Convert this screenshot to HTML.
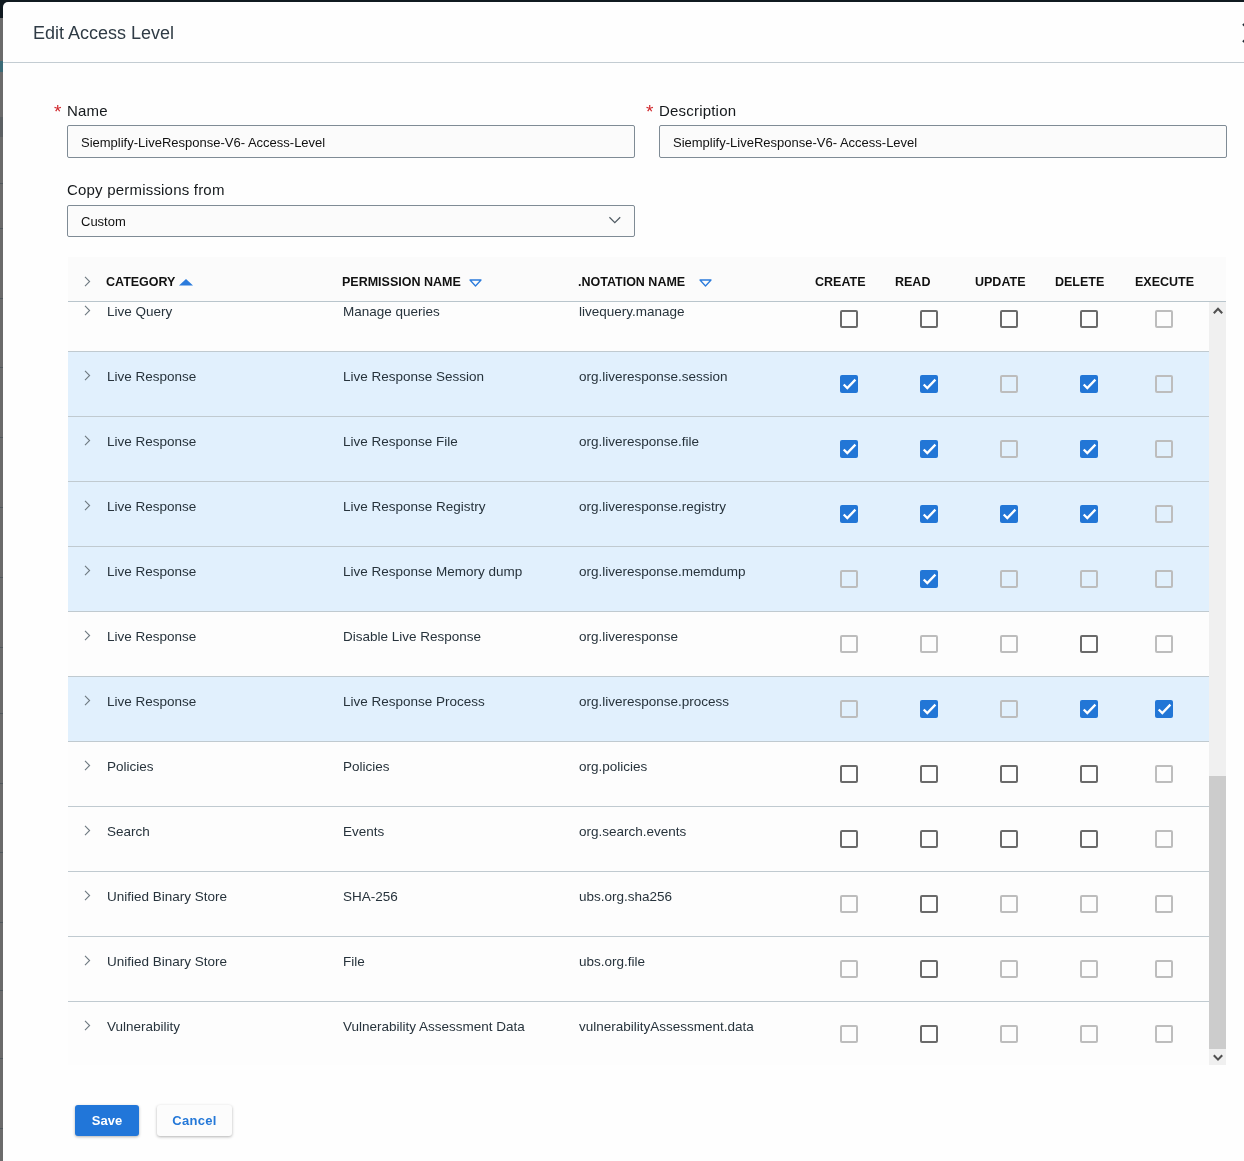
<!DOCTYPE html>
<html><head><meta charset="utf-8"><style>
*{box-sizing:border-box;margin:0;padding:0}
html,body{width:1244px;height:1161px;overflow:hidden}
body{background:#6b6b6b;font-family:"Liberation Sans",sans-serif;position:relative;-webkit-font-smoothing:antialiased}
.modal{will-change:transform}
.topbar{position:absolute;left:0;top:0;width:1244px;height:18px;background:#101a20}
.modal{position:absolute;left:3px;top:2px;width:1260px;height:1200px;background:#fefefe;border-radius:5px 0 0 0;overflow:hidden}
.abs{position:absolute}
.title{left:30px;top:21px;font-size:18px;color:#2f3b45;white-space:nowrap}
.hline{left:0;top:60px;width:1260px;height:1px;background:#c3ccd2}
.lbl{font-size:15px;letter-spacing:0.2px;color:#15191c;white-space:nowrap}
.star{color:#d0262b;font-size:19px;line-height:19px}
.inp{border:1px solid #7f8b95;border-radius:2px;background:#fbfbfb;height:33px}
.inp span{position:absolute;left:13px;top:9px;font-size:13px;letter-spacing:0px;color:#111;white-space:nowrap}
.thead{left:65px;top:255px;width:1158px;height:45px;background:#fbfbfb;border-bottom:1px solid #b9c5cc}
.th{font-size:12.5px;font-weight:bold;color:#111;white-space:nowrap;top:18px}
.body{left:65px;top:300px;width:1141px;height:763px;overflow:hidden;background:#fdfdfd}
.row{position:absolute;left:0;width:1141px;height:65px;border-bottom:1px solid #c0cad0}
.row.sel{background:#e1f0fd}
.cell{position:absolute;top:17px;font-size:13.5px;color:#27333c;white-space:nowrap}
.cb{position:absolute;width:18px;height:18px;border-radius:2px}
.cb.u{border:2px solid #6a6a6a}
.cb.d{border:2px solid #bdbdbd}
.cb.c{background:#2276d6}
.sb{left:1206px;top:300px;width:17px;height:763px;background:#f0f0f0}
.thumb{left:1206px;top:774px;width:17px;height:273px;background:#cccccc}
.btn{height:31px;border-radius:3px;font-size:13px;font-weight:bold;text-align:center;line-height:31px}
</style></head><body>
<div class="topbar"></div><div style="position:absolute;left:0;top:183px;width:3px;height:1px;background:#50585c"></div><div style="position:absolute;left:0;top:228px;width:3px;height:1px;background:#50585c"></div><div style="position:absolute;left:0;top:298px;width:3px;height:1px;background:#50585c"></div><div style="position:absolute;left:0;top:367px;width:3px;height:1px;background:#50585c"></div><div style="position:absolute;left:0;top:437px;width:3px;height:1px;background:#50585c"></div><div style="position:absolute;left:0;top:507px;width:3px;height:1px;background:#50585c"></div><div style="position:absolute;left:0;top:577px;width:3px;height:1px;background:#50585c"></div><div style="position:absolute;left:0;top:647px;width:3px;height:1px;background:#50585c"></div><div style="position:absolute;left:0;top:713px;width:3px;height:1px;background:#50585c"></div><div style="position:absolute;left:0;top:783px;width:3px;height:1px;background:#50585c"></div><div style="position:absolute;left:0;top:852px;width:3px;height:1px;background:#50585c"></div><div style="position:absolute;left:0;top:922px;width:3px;height:1px;background:#50585c"></div><div style="position:absolute;left:0;top:990px;width:3px;height:1px;background:#50585c"></div><div style="position:absolute;left:0;top:1058px;width:3px;height:1px;background:#50585c"></div><div style="position:absolute;left:0;top:1128px;width:3px;height:1px;background:#50585c"></div><div style="position:absolute;left:0;top:61px;width:3px;height:11px;background:#3a6a76"></div><div style="position:absolute;left:0;top:117px;width:3px;height:20px;background:#5c6063"></div>
<div class="modal">

<div class="abs title">Edit Access Level</div>
<div class="abs hline"></div>
<div class="abs star" style="left:51px;top:100px">*</div>
<div class="abs lbl" style="left:64px;top:100px">Name</div>
<div class="abs inp" style="left:64px;top:123px;width:568px"><span>Siemplify-LiveResponse-V6- Access-Level</span></div>
<div class="abs star" style="left:643px;top:100px">*</div>
<div class="abs lbl" style="left:656px;top:100px">Description</div>
<div class="abs inp" style="left:656px;top:123px;width:568px"><span>Siemplify-LiveResponse-V6- Access-Level</span></div>
<div class="abs lbl" style="left:64px;top:179px">Copy permissions from</div>
<div class="abs inp" style="left:64px;top:203px;width:568px;height:32px"><span style="top:8px">Custom</span><svg class="abs" style="left:541px;top:10px" width="12" height="8" viewBox="0 0 12 8"><path d="M0.4 1.3 L5.8 6.7 L11.2 1.3" fill="none" stroke="#505b63" stroke-width="1.25"/></svg></div>
<div class="abs thead">
<svg class="abs" style="left:16px;top:19px" width="7" height="11" viewBox="0 0 7 11"><path d="M1 0.8 L5.6 5.5 L1 10.2" fill="none" stroke="#6f7a82" stroke-width="1.1"/></svg>
<div class="abs th" style="left:38px">CATEGORY</div>
<svg class="abs" style="left:111px;top:21px" width="14" height="8" viewBox="0 0 14 8"><path d="M0 7.6 L7 0.9 L14 7.6 Z" fill="#2b7bdc"/></svg>
<div class="abs th" style="left:274px">PERMISSION NAME</div>
<svg class="abs" style="left:401px;top:22px" width="13" height="8" viewBox="0 0 13 8"><path d="M1 1 L12 1 L6.5 7 Z" fill="none" stroke="#2b7bdc" stroke-width="1.3" stroke-linejoin="round"/></svg>
<div class="abs th" style="left:510px">.NOTATION NAME</div>
<svg class="abs" style="left:631px;top:22px" width="13" height="8" viewBox="0 0 13 8"><path d="M1 1 L12 1 L6.5 7 Z" fill="none" stroke="#2b7bdc" stroke-width="1.3" stroke-linejoin="round"/></svg>
<div class="abs th" style="left:747px">CREATE</div>
<div class="abs th" style="left:827px">READ</div>
<div class="abs th" style="left:907px">UPDATE</div>
<div class="abs th" style="left:987px">DELETE</div>
<div class="abs th" style="left:1067px">EXECUTE</div>
</div>
<div class="abs body">
<div class="row" style="top:-15px">
<svg class="abs" style="left:16px;top:18px" width="7" height="11" viewBox="0 0 7 11"><path d="M1 0.8 L5.6 5.5 L1 10.2" fill="none" stroke="#6f7a82" stroke-width="1.1"/></svg>
<div class="cell" style="left:39px">Live Query</div>
<div class="cell" style="left:275px">Manage queries</div>
<div class="cell" style="left:511px">livequery.manage</div>
<div class="cb u" style="left:772px;top:23px"></div>
<div class="cb u" style="left:852px;top:23px"></div>
<div class="cb u" style="left:932px;top:23px"></div>
<div class="cb u" style="left:1012px;top:23px"></div>
<div class="cb d" style="left:1087px;top:23px"></div>
</div>
<div class="row sel" style="top:50px">
<svg class="abs" style="left:16px;top:18px" width="7" height="11" viewBox="0 0 7 11"><path d="M1 0.8 L5.6 5.5 L1 10.2" fill="none" stroke="#6f7a82" stroke-width="1.1"/></svg>
<div class="cell" style="left:39px">Live Response</div>
<div class="cell" style="left:275px">Live Response Session</div>
<div class="cell" style="left:511px">org.liveresponse.session</div>
<div class="cb c" style="left:772px;top:23px"><svg width="18" height="18" viewBox="0 0 18 18" style="position:absolute;left:0;top:0"><path d="M3.7 9.5 L7.3 13 L15.4 4.6" fill="none" stroke="#fff" stroke-width="2.3"/></svg></div>
<div class="cb c" style="left:852px;top:23px"><svg width="18" height="18" viewBox="0 0 18 18" style="position:absolute;left:0;top:0"><path d="M3.7 9.5 L7.3 13 L15.4 4.6" fill="none" stroke="#fff" stroke-width="2.3"/></svg></div>
<div class="cb d" style="left:932px;top:23px"></div>
<div class="cb c" style="left:1012px;top:23px"><svg width="18" height="18" viewBox="0 0 18 18" style="position:absolute;left:0;top:0"><path d="M3.7 9.5 L7.3 13 L15.4 4.6" fill="none" stroke="#fff" stroke-width="2.3"/></svg></div>
<div class="cb d" style="left:1087px;top:23px"></div>
</div>
<div class="row sel" style="top:115px">
<svg class="abs" style="left:16px;top:18px" width="7" height="11" viewBox="0 0 7 11"><path d="M1 0.8 L5.6 5.5 L1 10.2" fill="none" stroke="#6f7a82" stroke-width="1.1"/></svg>
<div class="cell" style="left:39px">Live Response</div>
<div class="cell" style="left:275px">Live Response File</div>
<div class="cell" style="left:511px">org.liveresponse.file</div>
<div class="cb c" style="left:772px;top:23px"><svg width="18" height="18" viewBox="0 0 18 18" style="position:absolute;left:0;top:0"><path d="M3.7 9.5 L7.3 13 L15.4 4.6" fill="none" stroke="#fff" stroke-width="2.3"/></svg></div>
<div class="cb c" style="left:852px;top:23px"><svg width="18" height="18" viewBox="0 0 18 18" style="position:absolute;left:0;top:0"><path d="M3.7 9.5 L7.3 13 L15.4 4.6" fill="none" stroke="#fff" stroke-width="2.3"/></svg></div>
<div class="cb d" style="left:932px;top:23px"></div>
<div class="cb c" style="left:1012px;top:23px"><svg width="18" height="18" viewBox="0 0 18 18" style="position:absolute;left:0;top:0"><path d="M3.7 9.5 L7.3 13 L15.4 4.6" fill="none" stroke="#fff" stroke-width="2.3"/></svg></div>
<div class="cb d" style="left:1087px;top:23px"></div>
</div>
<div class="row sel" style="top:180px">
<svg class="abs" style="left:16px;top:18px" width="7" height="11" viewBox="0 0 7 11"><path d="M1 0.8 L5.6 5.5 L1 10.2" fill="none" stroke="#6f7a82" stroke-width="1.1"/></svg>
<div class="cell" style="left:39px">Live Response</div>
<div class="cell" style="left:275px">Live Response Registry</div>
<div class="cell" style="left:511px">org.liveresponse.registry</div>
<div class="cb c" style="left:772px;top:23px"><svg width="18" height="18" viewBox="0 0 18 18" style="position:absolute;left:0;top:0"><path d="M3.7 9.5 L7.3 13 L15.4 4.6" fill="none" stroke="#fff" stroke-width="2.3"/></svg></div>
<div class="cb c" style="left:852px;top:23px"><svg width="18" height="18" viewBox="0 0 18 18" style="position:absolute;left:0;top:0"><path d="M3.7 9.5 L7.3 13 L15.4 4.6" fill="none" stroke="#fff" stroke-width="2.3"/></svg></div>
<div class="cb c" style="left:932px;top:23px"><svg width="18" height="18" viewBox="0 0 18 18" style="position:absolute;left:0;top:0"><path d="M3.7 9.5 L7.3 13 L15.4 4.6" fill="none" stroke="#fff" stroke-width="2.3"/></svg></div>
<div class="cb c" style="left:1012px;top:23px"><svg width="18" height="18" viewBox="0 0 18 18" style="position:absolute;left:0;top:0"><path d="M3.7 9.5 L7.3 13 L15.4 4.6" fill="none" stroke="#fff" stroke-width="2.3"/></svg></div>
<div class="cb d" style="left:1087px;top:23px"></div>
</div>
<div class="row sel" style="top:245px">
<svg class="abs" style="left:16px;top:18px" width="7" height="11" viewBox="0 0 7 11"><path d="M1 0.8 L5.6 5.5 L1 10.2" fill="none" stroke="#6f7a82" stroke-width="1.1"/></svg>
<div class="cell" style="left:39px">Live Response</div>
<div class="cell" style="left:275px">Live Response Memory dump</div>
<div class="cell" style="left:511px">org.liveresponse.memdump</div>
<div class="cb d" style="left:772px;top:23px"></div>
<div class="cb c" style="left:852px;top:23px"><svg width="18" height="18" viewBox="0 0 18 18" style="position:absolute;left:0;top:0"><path d="M3.7 9.5 L7.3 13 L15.4 4.6" fill="none" stroke="#fff" stroke-width="2.3"/></svg></div>
<div class="cb d" style="left:932px;top:23px"></div>
<div class="cb d" style="left:1012px;top:23px"></div>
<div class="cb d" style="left:1087px;top:23px"></div>
</div>
<div class="row" style="top:310px">
<svg class="abs" style="left:16px;top:18px" width="7" height="11" viewBox="0 0 7 11"><path d="M1 0.8 L5.6 5.5 L1 10.2" fill="none" stroke="#6f7a82" stroke-width="1.1"/></svg>
<div class="cell" style="left:39px">Live Response</div>
<div class="cell" style="left:275px">Disable Live Response</div>
<div class="cell" style="left:511px">org.liveresponse</div>
<div class="cb d" style="left:772px;top:23px"></div>
<div class="cb d" style="left:852px;top:23px"></div>
<div class="cb d" style="left:932px;top:23px"></div>
<div class="cb u" style="left:1012px;top:23px"></div>
<div class="cb d" style="left:1087px;top:23px"></div>
</div>
<div class="row sel" style="top:375px">
<svg class="abs" style="left:16px;top:18px" width="7" height="11" viewBox="0 0 7 11"><path d="M1 0.8 L5.6 5.5 L1 10.2" fill="none" stroke="#6f7a82" stroke-width="1.1"/></svg>
<div class="cell" style="left:39px">Live Response</div>
<div class="cell" style="left:275px">Live Response Process</div>
<div class="cell" style="left:511px">org.liveresponse.process</div>
<div class="cb d" style="left:772px;top:23px"></div>
<div class="cb c" style="left:852px;top:23px"><svg width="18" height="18" viewBox="0 0 18 18" style="position:absolute;left:0;top:0"><path d="M3.7 9.5 L7.3 13 L15.4 4.6" fill="none" stroke="#fff" stroke-width="2.3"/></svg></div>
<div class="cb d" style="left:932px;top:23px"></div>
<div class="cb c" style="left:1012px;top:23px"><svg width="18" height="18" viewBox="0 0 18 18" style="position:absolute;left:0;top:0"><path d="M3.7 9.5 L7.3 13 L15.4 4.6" fill="none" stroke="#fff" stroke-width="2.3"/></svg></div>
<div class="cb c" style="left:1087px;top:23px"><svg width="18" height="18" viewBox="0 0 18 18" style="position:absolute;left:0;top:0"><path d="M3.7 9.5 L7.3 13 L15.4 4.6" fill="none" stroke="#fff" stroke-width="2.3"/></svg></div>
</div>
<div class="row" style="top:440px">
<svg class="abs" style="left:16px;top:18px" width="7" height="11" viewBox="0 0 7 11"><path d="M1 0.8 L5.6 5.5 L1 10.2" fill="none" stroke="#6f7a82" stroke-width="1.1"/></svg>
<div class="cell" style="left:39px">Policies</div>
<div class="cell" style="left:275px">Policies</div>
<div class="cell" style="left:511px">org.policies</div>
<div class="cb u" style="left:772px;top:23px"></div>
<div class="cb u" style="left:852px;top:23px"></div>
<div class="cb u" style="left:932px;top:23px"></div>
<div class="cb u" style="left:1012px;top:23px"></div>
<div class="cb d" style="left:1087px;top:23px"></div>
</div>
<div class="row" style="top:505px">
<svg class="abs" style="left:16px;top:18px" width="7" height="11" viewBox="0 0 7 11"><path d="M1 0.8 L5.6 5.5 L1 10.2" fill="none" stroke="#6f7a82" stroke-width="1.1"/></svg>
<div class="cell" style="left:39px">Search</div>
<div class="cell" style="left:275px">Events</div>
<div class="cell" style="left:511px">org.search.events</div>
<div class="cb u" style="left:772px;top:23px"></div>
<div class="cb u" style="left:852px;top:23px"></div>
<div class="cb u" style="left:932px;top:23px"></div>
<div class="cb u" style="left:1012px;top:23px"></div>
<div class="cb d" style="left:1087px;top:23px"></div>
</div>
<div class="row" style="top:570px">
<svg class="abs" style="left:16px;top:18px" width="7" height="11" viewBox="0 0 7 11"><path d="M1 0.8 L5.6 5.5 L1 10.2" fill="none" stroke="#6f7a82" stroke-width="1.1"/></svg>
<div class="cell" style="left:39px">Unified Binary Store</div>
<div class="cell" style="left:275px">SHA-256</div>
<div class="cell" style="left:511px">ubs.org.sha256</div>
<div class="cb d" style="left:772px;top:23px"></div>
<div class="cb u" style="left:852px;top:23px"></div>
<div class="cb d" style="left:932px;top:23px"></div>
<div class="cb d" style="left:1012px;top:23px"></div>
<div class="cb d" style="left:1087px;top:23px"></div>
</div>
<div class="row" style="top:635px">
<svg class="abs" style="left:16px;top:18px" width="7" height="11" viewBox="0 0 7 11"><path d="M1 0.8 L5.6 5.5 L1 10.2" fill="none" stroke="#6f7a82" stroke-width="1.1"/></svg>
<div class="cell" style="left:39px">Unified Binary Store</div>
<div class="cell" style="left:275px">File</div>
<div class="cell" style="left:511px">ubs.org.file</div>
<div class="cb d" style="left:772px;top:23px"></div>
<div class="cb u" style="left:852px;top:23px"></div>
<div class="cb d" style="left:932px;top:23px"></div>
<div class="cb d" style="left:1012px;top:23px"></div>
<div class="cb d" style="left:1087px;top:23px"></div>
</div>
<div class="row" style="top:700px">
<svg class="abs" style="left:16px;top:18px" width="7" height="11" viewBox="0 0 7 11"><path d="M1 0.8 L5.6 5.5 L1 10.2" fill="none" stroke="#6f7a82" stroke-width="1.1"/></svg>
<div class="cell" style="left:39px">Vulnerability</div>
<div class="cell" style="left:275px">Vulnerability Assessment Data</div>
<div class="cell" style="left:511px">vulnerabilityAssessment.data</div>
<div class="cb d" style="left:772px;top:23px"></div>
<div class="cb u" style="left:852px;top:23px"></div>
<div class="cb d" style="left:932px;top:23px"></div>
<div class="cb d" style="left:1012px;top:23px"></div>
<div class="cb d" style="left:1087px;top:23px"></div>
</div>
</div>
<div class="abs sb"></div><div class="abs thumb"></div>
<svg class="abs" style="left:1209px;top:303px" width="12" height="10" viewBox="0 0 12 10"><path d="M1.8 8.2 L6 3.8 L10.2 8.2" fill="none" stroke="#505050" stroke-width="2.1"/></svg>
<svg class="abs" style="left:1209px;top:1051px" width="12" height="10" viewBox="0 0 12 10"><path d="M1.8 2.2 L6 6.6 L10.2 2.2" fill="none" stroke="#505050" stroke-width="2.1"/></svg>
<div class="abs btn" style="left:72px;top:1103px;width:64px;background:#2176d9;color:#fff;box-shadow:0 1px 3px rgba(0,0,0,.3)">Save</div>
<div class="abs btn" style="left:154px;top:1103px;width:75px;background:#fcfcfc;color:#2478d8;letter-spacing:0.3px;box-shadow:0 1px 3px rgba(0,0,0,.3)">Cancel</div>
<svg class="abs" style="left:1237px;top:19px" width="24" height="24" viewBox="0 0 24 24"><path d="M3 3 L21 21 M21 3 L3 21" fill="none" stroke="#1f2a33" stroke-width="2.2"/></svg>
</div></body></html>
